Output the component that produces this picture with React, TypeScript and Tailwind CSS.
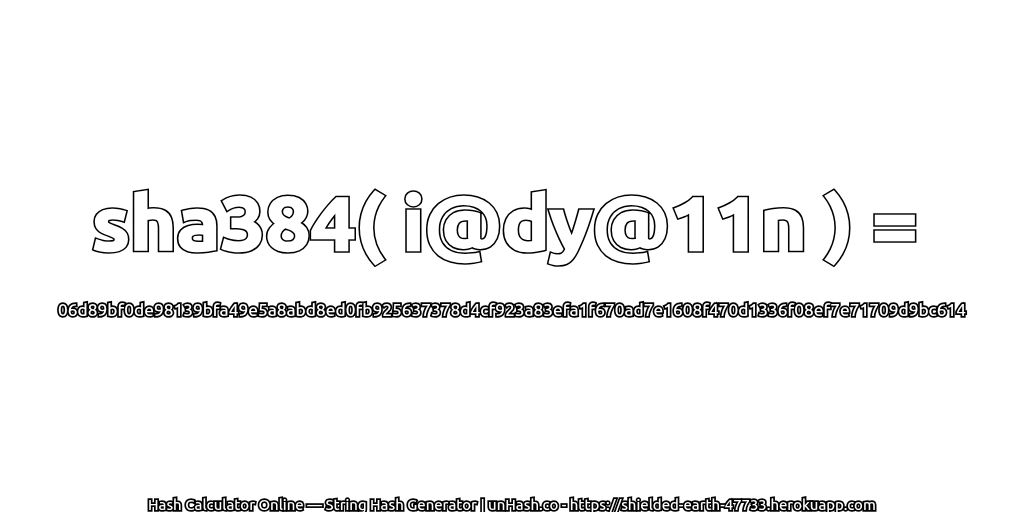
const outline = '[-webkit-text-stroke:3.5px_#000] [paint-order:stroke_fill] [will-change:transform]';

const title = 'sha384( i@dy@11n ) =';

export default function App() {
  return (
    <div className="flex h-[512px] w-[1024px] flex-col items-center overflow-hidden bg-white text-white font-['Ubuntu','Noto_Sans','DejaVu_Sans',sans-serif]">
      {/* white layer sits on the black stroke so the letters read fat with a thin outline */}
      <h1
        data-text={title}
        className="relative mt-[172px] mr-[15px] scale-x-[1.067] whitespace-nowrap text-[75px] font-bold leading-[100px] [-webkit-text-stroke:5.5px_#000] [will-change:transform] before:absolute before:left-0 before:top-0 before:content-[attr(data-text)] before:[-webkit-text-stroke:2.5px_#fff]"
      >
        {title}
      </h1>
      <p className={`mt-[26px] whitespace-nowrap text-[17.3px] font-medium leading-[24px] ${outline}`}>
        06d89bf0de98139bfa49e5a8abd8ed0fb925637378d4cf923a83efa1f670ad7e1608f470d1336f08ef7e71709d9bc614
      </p>
      <p className={`mt-auto mb-[-3px] whitespace-nowrap text-[14.9px] font-medium leading-[20px] ${outline}`}>
        Hash Calculator Online — String Hash Generator | unHash.co - https://shielded-earth-47733.herokuapp.com
      </p>
    </div>
  );
}
